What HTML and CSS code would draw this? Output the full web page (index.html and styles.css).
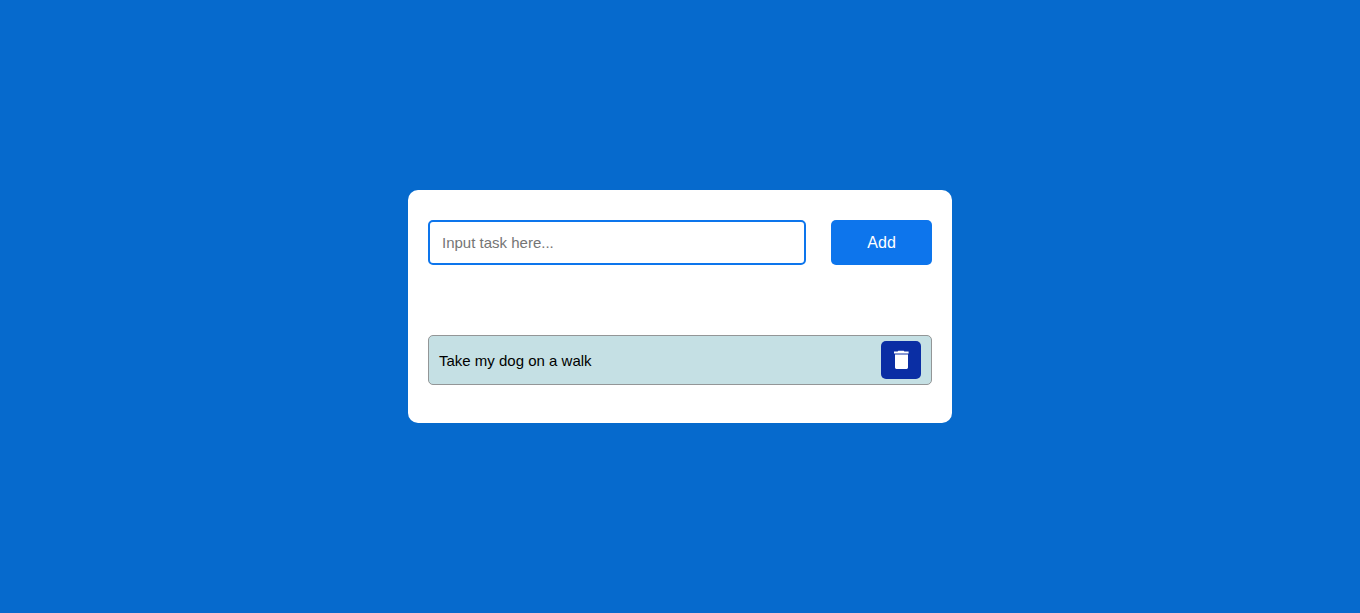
FILE: index.html
```html
<!DOCTYPE html>
<html lang="en">
<head>
<meta charset="utf-8">
<meta name="viewport" content="width=device-width, initial-scale=1">
<title>To-do list</title>
<link rel="stylesheet" href="styles.css">
</head>
<body>
<main class="container">
  <form class="new-task">
    <input class="task-input" type="text" aria-label="New task" placeholder="Input task here...">
    <button class="add-button" type="submit">Add</button>
  </form>
  <ul class="tasks">
    <li class="task">
      <span class="task-name">Take my dog on a walk</span>
      <button class="delete" type="button" aria-label="Delete task">
        <svg class="icon" viewBox="0 0 24 24" aria-hidden="true"><path d="M5 5.4V3.5h3.6l.7-.8h5.4l.7.8H19.6v1.9zM6 6.4h13v13.2a1.4 1.4 0 0 1-1.4 1.4H7.400a1.400 1.400 0 0 1-1.400-1.400z"/></svg>
      </button>
    </li>
  </ul>
</main>
</body>
</html>
```
FILE: styles.css
```css
* {
  box-sizing: border-box;
}

body {
  margin: 0;
  min-height: 100vh;
  display: flex;
  align-items: center;
  justify-content: center;
  background: #066acd;
  font-family: "Liberation Sans", Arial, sans-serif;
}

.container {
  width: 40%;
  min-width: 450px;
  padding: 30px 20px 38px;
  border-radius: 10px;
  background: #fff;
}

.new-task {
  display: flex;
  justify-content: space-between;
}

.task-input {
  width: 75%;
  height: 45px;
  padding: 12px;
  border: 2px solid #0d75ec;
  border-radius: 5px;
  font-family: inherit;
  font-size: 15px;
}

.add-button {
  width: 20%;
  border: 0;
  border-radius: 5px;
  background: #0d75ec;
  color: #fff;
  font-family: inherit;
  font-size: 16px;
}

.tasks {
  margin: 70px 0 0;
  padding: 0;
  list-style: none;
}

.task {
  display: flex;
  align-items: center;
  justify-content: space-between;
  padding: 5px 10px;
  border: 1px solid #939697;
  border-radius: 5px;
  background: #c5e0e4;
}

.task-name {
  font-size: 15px;
}

.delete {
  display: flex;
  align-items: center;
  justify-content: center;
  width: 40px;
  height: 38px;
  padding: 0;
  border: 0;
  border-radius: 5px;
  background: #0a2ea4;
}

.icon {
  width: 24px;
  height: 24px;
  fill: #fff;
}
```
